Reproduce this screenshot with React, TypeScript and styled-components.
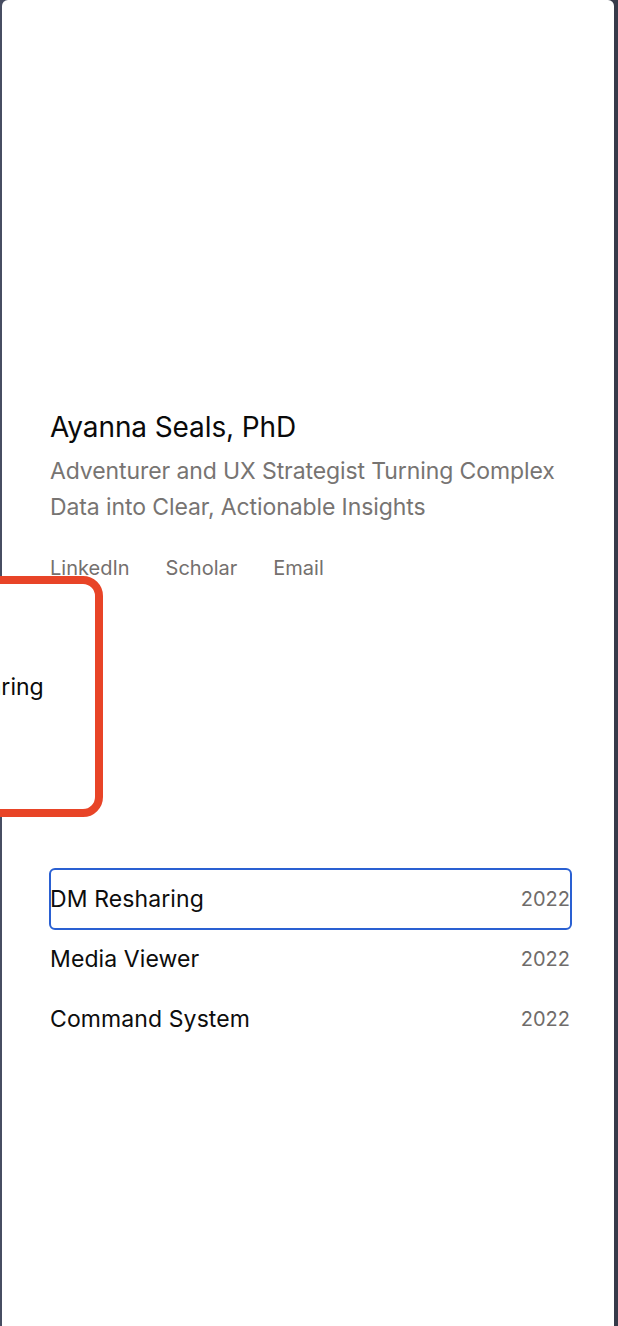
import React from 'react';
import styled, { createGlobalStyle } from 'styled-components';

const GlobalStyle = createGlobalStyle`
  html, body {
    margin: 0;
    padding: 0;
    background: #454a5d;
  }
  body {
    font-family: Inter, 'Noto Sans', 'Liberation Sans', sans-serif;
    -webkit-font-smoothing: antialiased;
  }
`;

const projects = [
  { title: 'DM Resharing', year: '2022', focused: true },
  { title: 'Media Viewer', year: '2022', focused: false },
  { title: 'Command System', year: '2022', focused: false },
];

const App = () => {
  return (
    <>
      <GlobalStyle />
      <Frame>
        <Panel>
          <Intro>
            <Name>Ayanna Seals, PhD</Name>
            <Tagline>
              Adventurer and UX Strategist Turning Complex Data into Clear, Actionable Insights
            </Tagline>
            <Links>
              <LinkItem>LinkedIn</LinkItem>
              <LinkItem>Scholar</LinkItem>
              <LinkItem>Email</LinkItem>
            </Links>
          </Intro>

          <Carousel>
            <FeatureCard>
              <CardTitle>DM Resharing</CardTitle>
            </FeatureCard>
          </Carousel>

          <ProjectList>
            {projects.map(p => (
              <ProjectRow key={p.title} $focused={p.focused}>
                <ProjectTitle>{p.title}</ProjectTitle>
                <ProjectYear>{p.year}</ProjectYear>
              </ProjectRow>
            ))}
          </ProjectList>
        </Panel>
      </Frame>
    </>
  );
};

const Frame = styled.div`
  padding: 0 4px 0 2px;
  min-height: 1326px;
  box-sizing: border-box;
  background: linear-gradient(to right, #474d62 0%, #454a5d 50%, #363a49 100%);
  overflow: hidden;
`;

const Panel = styled.main`
  position: relative;
  background: #ffffff;
  border-radius: 6px 6px 0 0;
  min-height: 1326px;
  padding: 410px 44px 0 48px;
  box-sizing: border-box;
`;

const Intro = styled.section`
  display: flex;
  flex-direction: column;
`;

const Name = styled.h1`
  margin: 0;
  font-size: 28px;
  line-height: 34px;
  font-weight: 400;
  color: #0a0a0a;
  letter-spacing: -0.1px;
`;

const Tagline = styled.p`
  margin: 9px 0 0;
  font-size: 23px;
  line-height: 36px;
  color: #777472;
  letter-spacing: -0.1px;
`;

const Links = styled.nav`
  display: flex;
  gap: 36px;
  margin-top: 31px;
`;

const LinkItem = styled.a`
  font-size: 20px;
  line-height: 24px;
  color: #74706e;
  text-decoration: none;
`;

const Carousel = styled.div`
  display: flex;
  margin-top: -4px;
  margin-left: -48px;
  height: 241px;
`;

const FeatureCard = styled.div`
  flex: 0 0 auto;
  width: 246px;
  margin-left: -145px;
  height: 241px;
  box-sizing: border-box;
  border: 8px solid #e84427;
  border-radius: 20px;
  background: #ffffff;
  display: flex;
  align-items: center;
  padding: 0 0 20px 26px;
`;

const CardTitle = styled.span`
  font-size: 23px;
  color: #0a0a0a;
`;

const ProjectList = styled.ul`
  list-style: none;
  margin: 53px 0 0;
  padding: 0;
`;

const ProjectRow = styled.li<{ $focused: boolean }>`
  display: flex;
  justify-content: space-between;
  align-items: center;
  height: 58px;
  margin-bottom: 2px;
  margin-left: 1px;
  border-radius: 4px;
  outline: ${p => (p.$focused ? '2px solid #2a60d2' : 'none')};
`;

const ProjectTitle = styled.span`
  font-size: 23px;
  color: #0d0d0d;
  margin-left: -1px;
  letter-spacing: 0.1px;
`;

const ProjectYear = styled.span`
  font-size: 20px;
  color: #6f6c6a;
`;

export default App;
